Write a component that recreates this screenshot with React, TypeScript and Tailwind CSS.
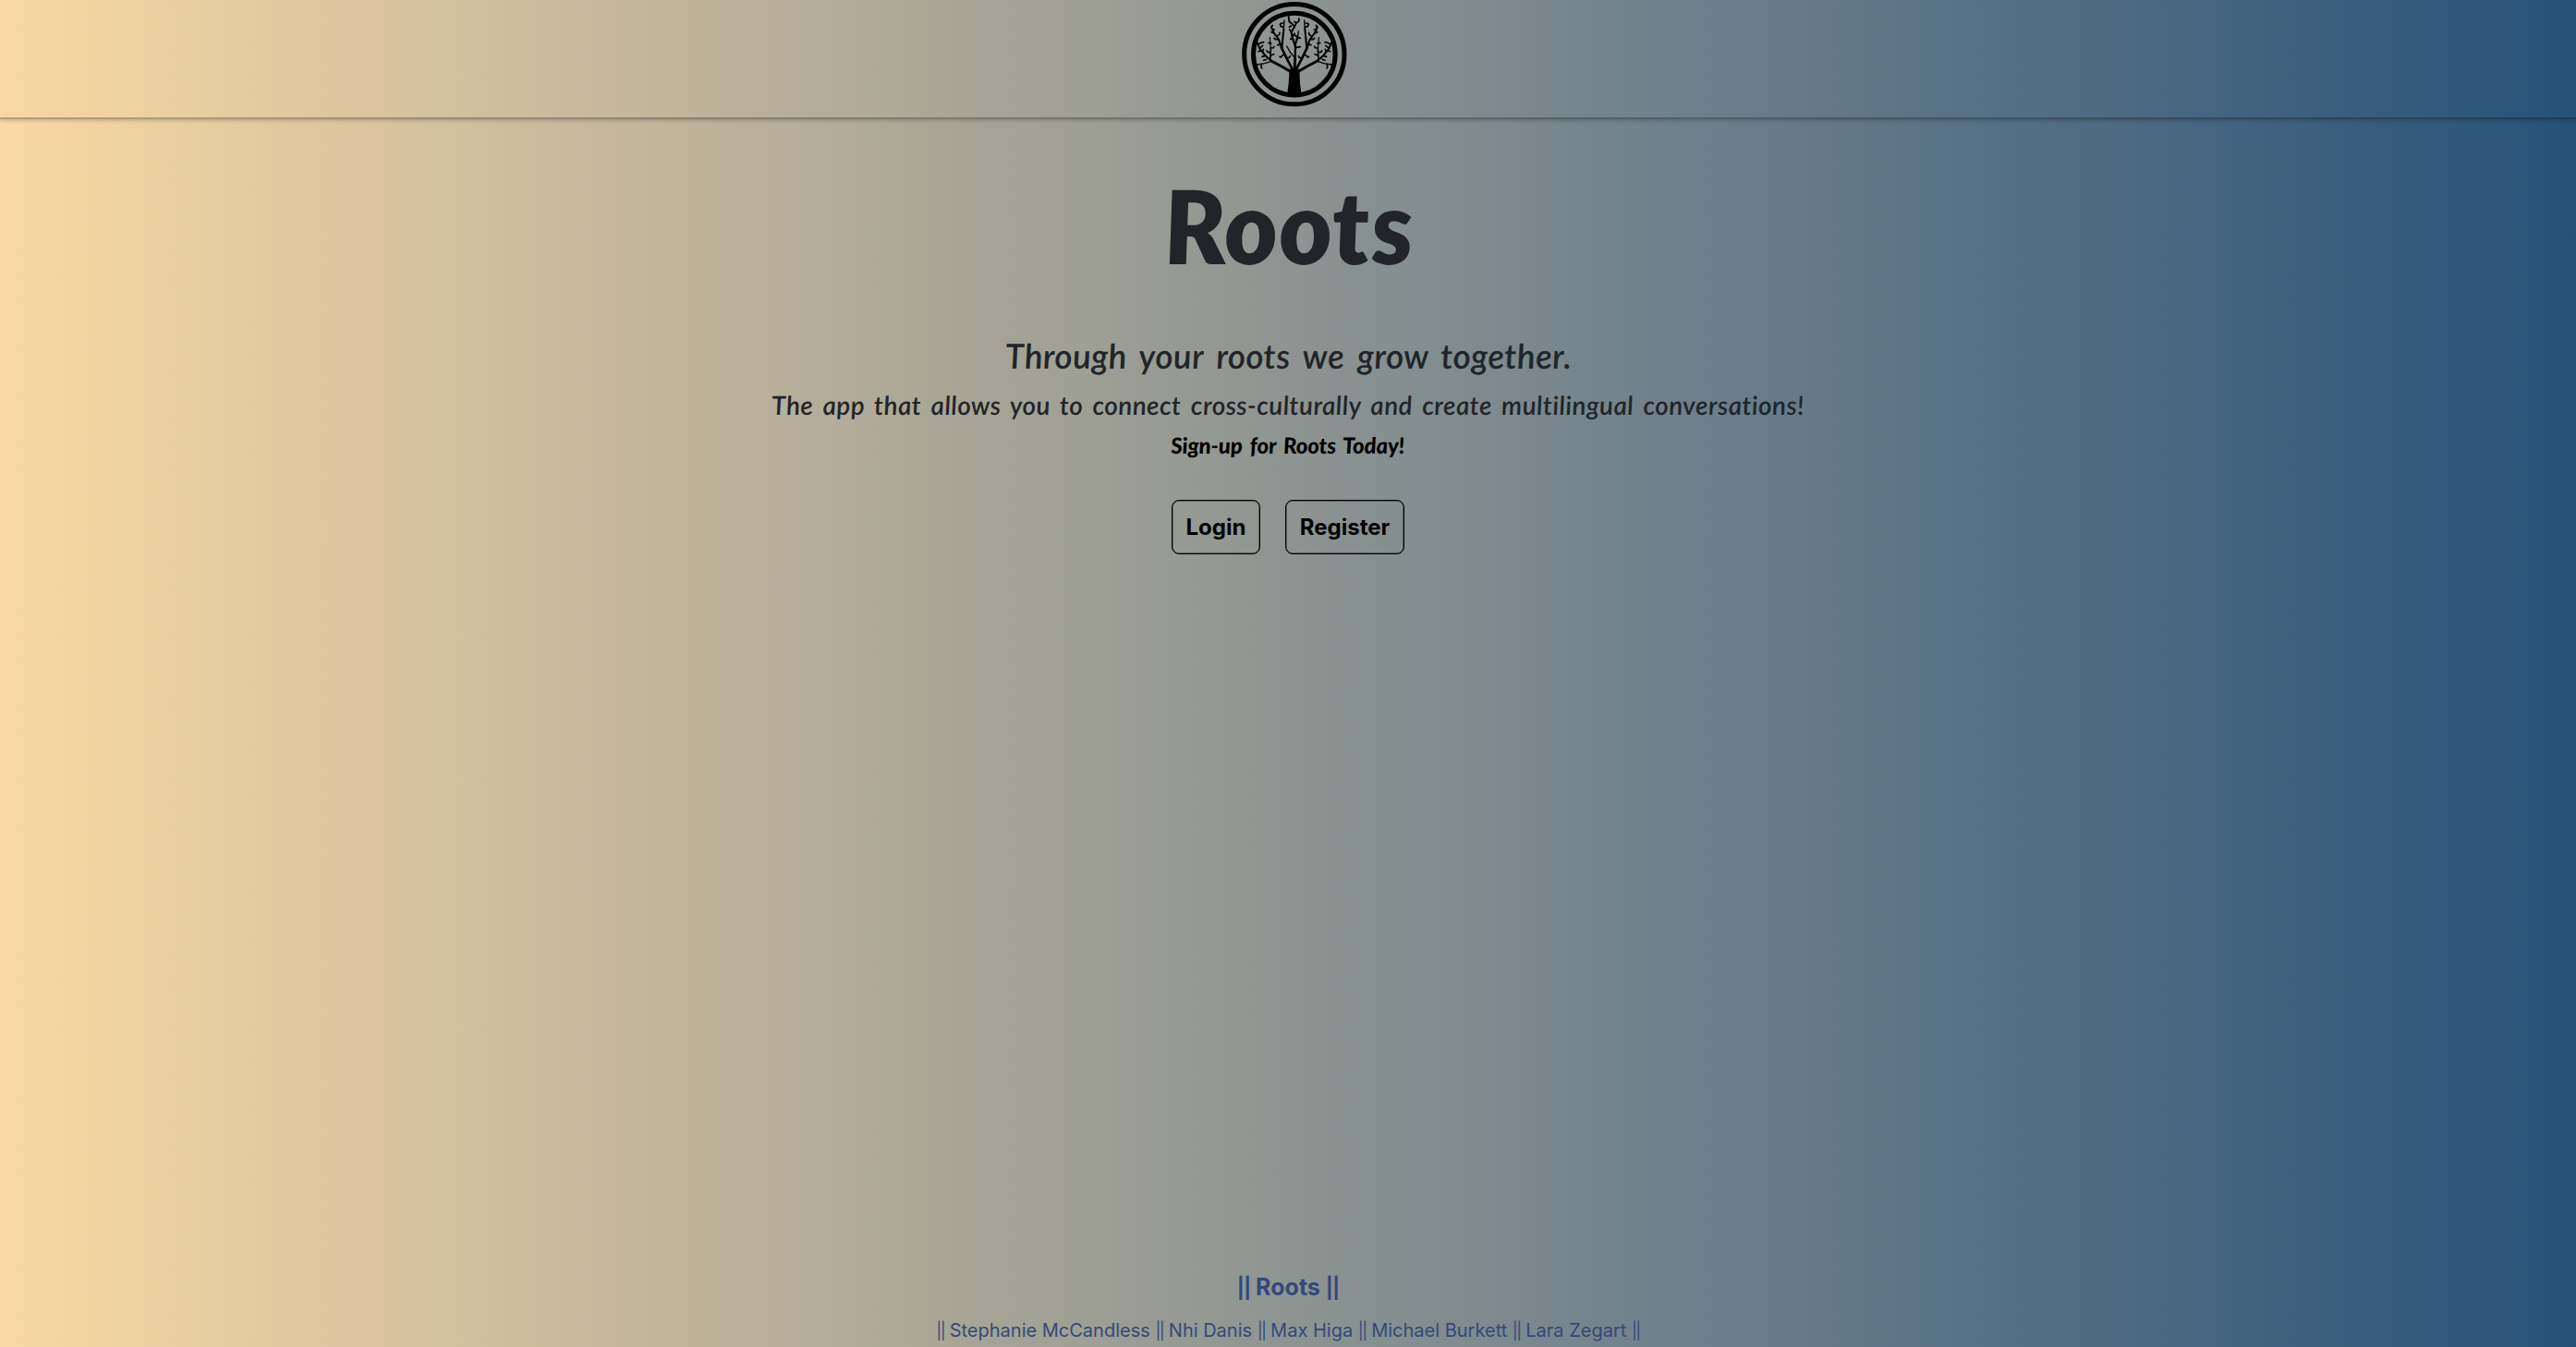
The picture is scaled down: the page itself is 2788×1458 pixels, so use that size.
function LimbHalf() {
  return (
    <g strokeLinecap="round" strokeLinejoin="round">
      <path strokeWidth="9" d="M206 236 L172 216 L138 198" />
      <path strokeWidth="8" d="M209 230 L188 190 L171 155" />
      <path strokeWidth="6" d="M138 198 L118 180 L100 158 L92 138" />
      <path strokeWidth="4" d="M138 199 L116 206 L90 210" />
      <path strokeWidth="5" d="M134 194 L136 160" />
      <path strokeWidth="3.5" d="M136 160 L133 122" />
      <path strokeWidth="6" d="M171 155 L162 128 L147 108 L138 88" />
      <path strokeWidth="6" d="M172 160 L175 125 L178 95" />
      <path strokeWidth="4" d="M178 95 L180 66" />
      <g strokeWidth="5">
        <path d="M138 88 L142 82 M140 95 L148 96 M147 108 L138 104 M155 118 L164 112 L165 106" />
        <path d="M162 128 L151 128 L147 124 M178 88 L169 86 L166 79 M175 75 L168 77 M166 145 L158 146" />
        <path d="M179 176 L168 186 M187 188 L196 187 L199 182 M170 186 L165 184" />
        <path d="M136 156 L145 155 L147 151 M135 170 L126 169 L123 165 M137 141 L129 139 M136 180 L146 176" />
        <path d="M104 164 L96 167 M110 170 L112 160 M101 156 L110 148 M94 145 L106 138 L113 137 M118 181 L108 184" />
        <path d="M106 209 L105 218 L107 222 M122 193 L113 196" />
      </g>
    </g>
  );
}

function TreeLogo() {
  return (
    <svg width="140" height="127" viewBox="0 0 420 381" fill="none" stroke="#000" aria-label="Roots logo">
      <circle cx="212.500" cy="176" r="162.500" strokeWidth="15" />
      <circle cx="212.500" cy="176" r="133" strokeWidth="15" />
      <LimbHalf />
      <g transform="translate(425 0) scale(-1 1)">
        <LimbHalf />
      </g>
      <g strokeLinecap="round" strokeLinejoin="round">
        <path strokeWidth="9" d="M213 236 L215 190" />
        <path strokeWidth="7" d="M215 190 L216 150 L206 122 L203 104" />
        <path strokeWidth="6" d="M203 104 L213 86 L204 76 L196 70 L194 54" />
        <path strokeWidth="5" d="M213 88 L218 76 L228 68 L227 60 M219 75 L213 70" />
        <path strokeWidth="4" d="M211 184 L198 168 L188 150 M216 145 L223 125 L226 102" />
        <path strokeWidth="5" d="M203 104 L197 96 M206 118 L214 109 M208 125 L200 127 M218 138 L222 118 L215 116 M216 155 L232 152 M225 122 L232 124 M202 84 L196 88" />
      </g>
      <path fill="#000" stroke="none" d="M197 224 L229 224 L231 270 L236 309 L189 309 L194 270 Z" />
    </svg>
  );
}

function OutlineButton({ label, width }: { label: string; width: string }) {
  return (
    <button
      className={`flex h-[59px] items-center justify-center rounded-[8px] border border-black font-[Inter,sans-serif] text-[24px] leading-[36px] font-bold text-black shadow-[inset_0_0_0_0.5px_rgba(0,0,0,0.7)] ${width}`}
    >
      {label}
    </button>
  );
}

const authors = ["Stephanie McCandless", "Nhi Danis", "Max Higa", "Michael Burkett", "Lara Zegart"];

export default function App() {
  return (
    <div className="flex h-[1458px] w-[2788px] flex-col bg-linear-to-r from-[#f9d8a2] to-[#265278] font-[Inter,sans-serif]">
      <header className="flex h-[129px] shrink-0 justify-center border-b-2 border-black/25 pl-[12px] shadow-[0_1px_4px_rgba(0,0,0,0.25)]">
        <TreeLogo />
      </header>
      <main className="flex flex-1 flex-col items-center font-[Lato,sans-serif] whitespace-nowrap text-[#212529] italic">
        <h1 className="mt-[44px] skew-x-[5deg] text-[110px] leading-[140px] font-extrabold tracking-[1px]">Roots</h1>
        <h2 className="mt-[49px] skew-x-[4deg] text-[37px] leading-[46px] font-semibold tracking-[0.3px] [word-spacing:5px]">
          Through your roots we grow together.
        </h2>
        <p className="mt-[7px] skew-x-[4deg] text-[28px] leading-[46px] font-semibold tracking-[0.4px] [word-spacing:3.5px]">
          The app that allows you to connect cross-culturally and create multilingual conversations!
        </p>
        <p className="mt-[2px] skew-x-[4deg] text-[24px] leading-[37px] font-black tracking-[-0.1px] text-black [word-spacing:3px]">
          Sign-up for Roots Today!
        </p>
        <div className="mt-[41px] flex gap-[27px] not-italic">
          <OutlineButton label="Login" width="w-[96px]" />
          <OutlineButton label="Register" width="w-[129px]" />
        </div>
      </main>
      <footer className="flex flex-col items-center pb-[3px] whitespace-nowrap text-[#33497a]">
        <p className="text-[25px] leading-[36px] font-bold">
          <span className="text-[22px] leading-none tracking-[-1px]">||</span> Roots{" "}
          <span className="text-[22px] leading-none tracking-[-1px]">||</span>
        </p>
        <p className="mt-[14px] text-[20px] leading-[30px]">
          <span className="text-[18px] leading-none tracking-[-1.6px]">||</span>
          {authors.map((name) => (
            <span key={name}>
              {" "}
              {name} <span className="text-[18px] leading-none tracking-[-1.6px]">||</span>
            </span>
          ))}
        </p>
      </footer>
    </div>
  );
}
